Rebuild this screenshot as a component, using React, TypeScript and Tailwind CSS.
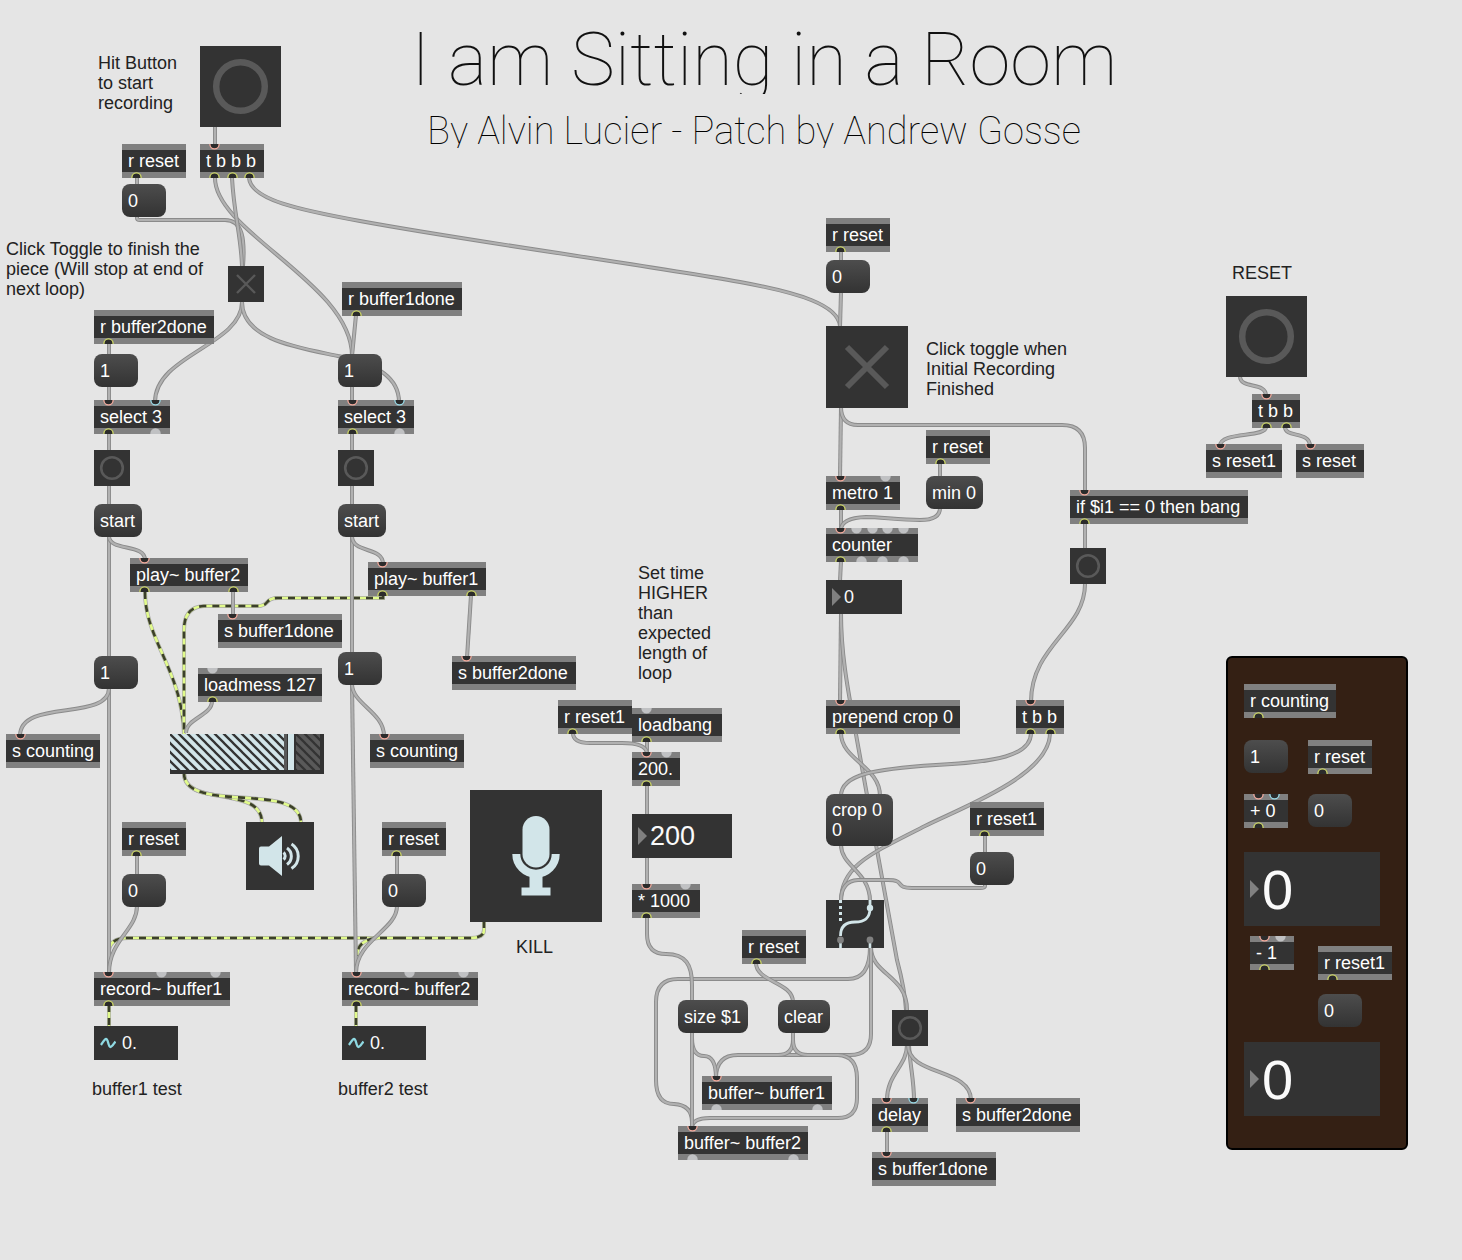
import { useState } from "react";
import type { ReactNode } from "react";

type PortKind = "hot" | "cold" | "idle" | "out";
type Port = [offset: number, kind: PortKind];
type Box = { x: number; y: number; w: number; text: string; ins?: Port[]; outs?: Port[] };
type Message = { x: number; y: number; w: number; text: string };
type Comment = { x: number; y: number; text: string };

const HOT: Port[] = [[14, "hot"]];
const OUT: Port[] = [[14, "out"]];

const boxes: Box[] = [
  { x: 122, y: 144, w: 64, text: "r reset", outs: OUT },
  { x: 200, y: 144, w: 64, text: "t b b b", ins: HOT, outs: [[14, "out"], [32, "out"], [49, "out"]] },
  { x: 94, y: 310, w: 120, text: "r buffer2done", outs: OUT },
  { x: 342, y: 282, w: 120, text: "r buffer1done", outs: OUT },
  { x: 94, y: 400, w: 76, text: "select 3", ins: [[14, "hot"], [61, "cold"]], outs: [[14, "out"], [61, "idle"]] },
  { x: 338, y: 400, w: 76, text: "select 3", ins: [[14, "hot"], [61, "cold"]], outs: [[14, "out"], [61, "idle"]] },
  { x: 130, y: 558, w: 118, text: "play~ buffer2", ins: HOT, outs: [[14, "out"], [103, "out"]] },
  { x: 368, y: 562, w: 118, text: "play~ buffer1", ins: HOT, outs: [[14, "out"], [103, "out"]] },
  { x: 218, y: 614, w: 124, text: "s buffer1done", ins: HOT },
  { x: 452, y: 656, w: 124, text: "s buffer2done", ins: HOT },
  { x: 198, y: 668, w: 124, text: "loadmess 127", ins: [[14, "idle"]], outs: OUT },
  { x: 6, y: 734, w: 94, text: "s counting", ins: HOT },
  { x: 370, y: 734, w: 94, text: "s counting", ins: HOT },
  { x: 122, y: 822, w: 64, text: "r reset", outs: OUT },
  { x: 382, y: 822, w: 64, text: "r reset", outs: OUT },
  { x: 94, y: 972, w: 136, text: "record~ buffer1", ins: [[14, "hot"], [67, "idle"], [121, "idle"]], outs: OUT },
  { x: 342, y: 972, w: 136, text: "record~ buffer2", ins: [[14, "hot"], [67, "idle"], [121, "idle"]], outs: OUT },
  { x: 558, y: 700, w: 74, text: "r reset1", outs: OUT },
  { x: 632, y: 708, w: 90, text: "loadbang", ins: [[14, "idle"]], outs: OUT },
  { x: 632, y: 752, w: 48, text: "200.", ins: [[14, "hot"], [34, "idle"]], outs: OUT },
  { x: 632, y: 884, w: 68, text: "* 1000", ins: [[14, "hot"], [53, "idle"]], outs: OUT },
  { x: 742, y: 930, w: 64, text: "r reset", outs: OUT },
  { x: 826, y: 218, w: 64, text: "r reset", outs: OUT },
  { x: 926, y: 430, w: 64, text: "r reset", outs: OUT },
  { x: 826, y: 476, w: 74, text: "metro 1", ins: [[14, "hot"], [59, "idle"]], outs: OUT },
  {
    x: 826, y: 528, w: 92, text: "counter",
    ins: [[14, "hot"], [30, "idle"], [46, "idle"], [61, "idle"], [77, "idle"]],
    outs: [[14, "out"], [35, "idle"], [56, "idle"], [77, "idle"]],
  },
  { x: 826, y: 700, w: 134, text: "prepend crop 0", ins: HOT, outs: OUT },
  { x: 1016, y: 700, w: 48, text: "t b b", ins: HOT, outs: [[14, "out"], [34, "out"]] },
  { x: 970, y: 802, w: 74, text: "r reset1", outs: OUT },
  { x: 1070, y: 490, w: 178, text: "if $i1 == 0 then bang", ins: HOT, outs: OUT },
  { x: 702, y: 1076, w: 130, text: "buffer~ buffer1", ins: HOT, outs: [[14, "idle"], [115, "idle"]] },
  { x: 678, y: 1126, w: 130, text: "buffer~ buffer2", ins: HOT, outs: [[14, "idle"], [115, "idle"]] },
  { x: 872, y: 1098, w: 56, text: "delay", ins: [[14, "hot"], [41, "cold"]], outs: OUT },
  { x: 956, y: 1098, w: 124, text: "s buffer2done", ins: HOT },
  { x: 872, y: 1152, w: 124, text: "s buffer1done", ins: HOT },
  { x: 1252, y: 394, w: 48, text: "t b b", ins: HOT, outs: [[14, "out"], [34, "out"]] },
  { x: 1206, y: 444, w: 76, text: "s reset1", ins: HOT },
  { x: 1296, y: 444, w: 68, text: "s reset", ins: HOT },
  { x: 1244, y: 684, w: 92, text: "r counting", outs: OUT },
  { x: 1308, y: 740, w: 64, text: "r reset", outs: OUT },
  { x: 1244, y: 794, w: 44, text: "+ 0", ins: [[14, "hot"], [30, "cold"]], outs: OUT },
  { x: 1250, y: 936, w: 44, text: "- 1", ins: [[14, "hot"], [30, "idle"]], outs: OUT },
  { x: 1318, y: 946, w: 74, text: "r reset1", outs: OUT },
];

const messages: Message[] = [
  { x: 122, y: 184, w: 44, text: "0" },
  { x: 94, y: 354, w: 44, text: "1" },
  { x: 338, y: 354, w: 44, text: "1" },
  { x: 94, y: 504, w: 48, text: "start" },
  { x: 338, y: 504, w: 48, text: "start" },
  { x: 94, y: 656, w: 44, text: "1" },
  { x: 338, y: 652, w: 44, text: "1" },
  { x: 122, y: 874, w: 44, text: "0" },
  { x: 382, y: 874, w: 44, text: "0" },
  { x: 826, y: 260, w: 44, text: "0" },
  { x: 926, y: 476, w: 57, text: "min 0" },
  { x: 826, y: 794, w: 67, text: "crop 0\n0" },
  { x: 970, y: 852, w: 44, text: "0" },
  { x: 678, y: 1000, w: 70, text: "size $1" },
  { x: 778, y: 1000, w: 52, text: "clear" },
  { x: 1244, y: 740, w: 44, text: "1" },
  { x: 1308, y: 794, w: 44, text: "0" },
  { x: 1318, y: 994, w: 44, text: "0" },
];

const comments: Comment[] = [
  { x: 98, y: 53, text: "Hit Button\nto start\nrecording" },
  { x: 6, y: 239, text: "Click Toggle to finish the\npiece (Will stop at end of\nnext loop)" },
  { x: 638, y: 563, text: "Set time\nHIGHER\nthan\nexpected\nlength of\nloop" },
  { x: 926, y: 339, text: "Click toggle when\nInitial Recording\nFinished" },
  { x: 1232, y: 263, text: "RESET" },
  { x: 516, y: 937, text: "KILL" },
  { x: 92, y: 1079, text: "buffer1 test" },
  { x: 338, y: 1079, text: "buffer2 test" },
];

const controlCords = [
  "M215 127V147",
  "M137 178V186",
  "M137 216V218Q137 220 140 220H225C243 220 245 240 243 266",
  "M215 178C215 232 352 284 352 356",
  "M232 178C234 215 241 235 242 266",
  "M249 178C251 200 300 210 360 221C480 243 640 264 740 282C800 293 838 305 840 326",
  "M242 302C242 345 155 355 155 402",
  "M242 302C242 340 300 348 338 356C370 362 399 374 399 402",
  "M356 315L352 356",
  "M109 343V356",
  "M109 386V402",
  "M109 434V450",
  "M109 486V506",
  "M109 536V973",
  "M109 536C109 552 145 543 145 560",
  "M109 688C109 722 20 698 20 736",
  "M352 386V402",
  "M352 434V450",
  "M352 486V506",
  "M352 536V654",
  "M352 684L356 973",
  "M352 536C352 554 383 546 383 564",
  "M352 684C352 704 384 712 384 736",
  "M233 591V616",
  "M471 595L467 658",
  "M212 701C212 716 186 718 186 733",
  "M137 855V876",
  "M137 906C137 930 109 940 109 973",
  "M397 855V876",
  "M397 906C397 930 356 940 356 973",
  "M841 251V262",
  "M841 292L840 327",
  "M841 407L840 478",
  "M841 407Q841 425 858 425H1062Q1085 425 1085 448V492",
  "M841 509V530",
  "M940 508Q940 520 920 520C900 520 880 517 866 517Q841 518 841 530",
  "M940 463V478",
  "M841 561L840 581",
  "M841 613L840 702",
  "M841 613C841 660 850 700 857 740L897 960Q905 990 906 1010",
  "M841 733C841 760 880 766 880 796",
  "M1031 733C1031 756 995 762 936 765C875 769 841 774 841 796",
  "M1050 733C1050 775 965 806 925 826C870 854 841 866 841 901",
  "M1085 523V549",
  "M1085 584C1085 630 1031 645 1031 702",
  "M841 845C841 866 870 872 870 901",
  "M985 835V854",
  "M985 884V886Q985 888 980 888H912C894 888 906 880 888 880H858Q841 881 841 901",
  "M871 947C871 975 907 975 907 1010",
  "M870 947Q870 979 848 979H678Q656 979 656 1002V1080Q656 1104 674 1104Q692 1105 692 1122",
  "M871 947V1034Q871 1055 850 1055H738Q716 1055 716 1078",
  "M793 1032V1040Q793 1055 778 1055",
  "M793 1032V1040Q793 1055 808 1055H838Q857 1056 857 1078V1098Q857 1118 838 1118H710Q692 1118 692 1128",
  "M692 1032V1038Q692 1056 704 1056Q716 1056 716 1078",
  "M692 1032V1128",
  "M756 963C756 982 793 982 793 1002",
  "M647 916V934Q647 954 666 954C686 954 692 965 692 985V1002",
  "M647 857V886",
  "M647 785V815",
  "M647 741V754",
  "M573 733Q573 743 590 743H622Q647 743 647 754",
  "M907 1045C907 1066 887 1074 887 1100",
  "M909 1045C910 1066 914 1080 914 1100",
  "M908 1045C908 1076 971 1068 971 1100",
  "M887 1131V1154",
  "M1240 376C1240 390 1266 381 1266 396",
  "M1266 427C1266 438 1220 431 1220 446",
  "M1285 427C1285 438 1310 431 1310 446",
];

const signalCords = [
  "M145 592C145 640 182 670 184 734",
  "M383 595V598H278C264 598 270 606 258 606H204Q184 607 184 630V734",
  "M184 773C184 808 262 784 262 823",
  "M184 773C184 815 301 780 301 823",
  "M484 921V930Q484 938 470 938H128Q109 938 109 952",
  "M400 938H378Q357 940 357 956",
  "M109 1005V1027",
  "M356 1005V1027",
];

function PatchCords() {
  return (
    <svg width="1462" height="1260" fill="none" aria-hidden="true" className="pointer-events-none absolute top-0 left-0">
      {signalCords.map((d) => (
        <g key={d}>
          <path d={d} stroke="#a9a9a9" strokeWidth="4" />
          <path d={d} stroke="#e1fb8b" strokeWidth="2.6" />
          <path d={d} stroke="#3b3f2a" strokeWidth="2.6" strokeDasharray="7 6" />
        </g>
      ))}
      {controlCords.map((d) => (
        <g key={d}>
          <path d={d} stroke="#8b8b8b" strokeWidth="4" />
          <path d={d} stroke="#b1b1b1" strokeWidth="2.2" />
        </g>
      ))}
    </svg>
  );
}

/* Positions one item of the patch on the free canvas. */
function Place({ x, y, children }: { x: number; y: number; children: ReactNode }) {
  return (
    <div className="absolute flex" style={{ left: x, top: y }}>
      {children}
    </div>
  );
}

const ringColor: Record<PortKind, string> = { hot: "#f5aa9c", cold: "#98dbe8", idle: "#c0c1c3", out: "#cfd966" };

function Ports({ w, ports, inlet }: { w: number; ports: Port[]; inlet: boolean }) {
  return (
    <svg width={w} height="6" className="block bg-[#808080]" aria-hidden="true">
      {ports.map(([cx, kind]) => (
        <circle
          key={cx}
          cx={cx + 0.5}
          cy={inlet ? 0.3 : 5.5}
          r={kind === "idle" ? 5.2 : 4.6}
          fill={kind === "idle" ? "#c0c1c3" : "#2b2b2b"}
          stroke={ringColor[kind]}
          strokeWidth={kind === "idle" ? 0 : 1.3}
        />
      ))}
    </svg>
  );
}

function ObjectBox({ box }: { box: Box }) {
  return (
    <div style={{ width: box.w }} className="bg-[#333333]">
      <Ports w={box.w} ports={box.ins ?? []} inlet />
      <p className="h-[22px] pl-1.5 text-[18px] leading-[22px] whitespace-nowrap text-white">{box.text}</p>
      <Ports w={box.w} ports={box.outs ?? []} inlet={false} />
    </div>
  );
}

function MessageBox({ message }: { message: Message }) {
  return (
    <button
      type="button"
      style={{ width: message.w }}
      className="min-h-[33px] rounded-lg bg-linear-to-b from-[#4d4d4d] to-[#333333] py-1.5 pl-1.5 text-left text-[18px] leading-5 whitespace-pre text-white"
    >
      {message.text}
    </button>
  );
}

function Bang({ size, label }: { size: number; label: string }) {
  const big = size > 50;
  return (
    <button type="button" aria-label={label} className="bg-[#333333]">
      <svg width={size} height={size} fill="none" className="block">
        <circle cx={size / 2} cy={size / 2} r={big ? 24.3 : 10.8} stroke="#595959" strokeWidth={big ? 6.5 : 2.6} />
      </svg>
    </button>
  );
}

function Toggle({ size, label }: { size: number; label: string }) {
  const [on, setOn] = useState(false);
  const a = size > 50 ? 21 : 9;
  const b = size - a;
  return (
    <label className="bg-[#333333]">
      <input type="checkbox" aria-label={label} checked={on} onChange={() => setOn(!on)} className="peer sr-only" />
      <svg
        width={size}
        height={size}
        strokeWidth={size > 50 ? 6 : 2.4}
        className="block stroke-[#595959] peer-checked:stroke-[#d2e5e9]"
      >
        <path d={`M${a} ${a}L${b} ${b}M${b} ${a}L${a} ${b}`} />
      </svg>
    </label>
  );
}

function Marker() {
  return (
    <svg width="9" height="18" className="shrink-0" aria-hidden="true">
      <path d="M0 0L9 9L0 18Z" fill="#808080" />
    </svg>
  );
}

function NumberBox({ label, value, className }: { label: string; value: string; className: string }) {
  return (
    <label className={`flex items-center gap-[3px] bg-[#333333] pl-1.5 text-[#fafafa] ${className}`}>
      <Marker />
      <input aria-label={label} defaultValue={value} inputMode="numeric" className="h-full w-full min-w-0 bg-transparent p-0 outline-none" />
    </label>
  );
}

function SignalNumber({ label }: { label: string }) {
  return (
    <label className="flex h-[34px] w-[84px] items-center gap-1.5 bg-[#333333] pl-1.5 text-[18px] text-[#fafafa]">
      <svg width="16" height="12" fill="none" className="shrink-0" aria-hidden="true">
        <path d="M1 8C3 5 4.500 2 6 2C8.500 2 8 10 10.500 10C12 10 13.500 7 15.500 4.500" stroke="#8fd9e2" strokeWidth="2.3" />
      </svg>
      <input aria-label={label} defaultValue="0." className="h-full w-full min-w-0 bg-transparent p-0 outline-none" />
    </label>
  );
}

function GainSlider() {
  return (
    <label className="block bg-[#333333]">
      <input type="range" aria-label="Output gain" min="0" max="157" defaultValue="127" className="sr-only" />
      <svg width="154" height="40" className="block" aria-hidden="true">
        <defs>
          <pattern id="hatch" width="9" height="9" patternUnits="userSpaceOnUse">
            <path d="M-2 -2L11 11M-2 7L2 11M7 -2L11 2" stroke="#333333" strokeWidth="2.3" />
          </pattern>
        </defs>
        <rect width="114" height="36" fill="#d2e5e9" />
        <rect x="114" width="3" height="36" fill="#595959" />
        <rect x="118" width="6" height="36" fill="#d2e5e9" />
        <rect x="126" width="24" height="36" fill="#595959" />
        <rect width="114" height="36" fill="url(#hatch)" />
        <rect x="126" width="24" height="36" fill="url(#hatch)" />
      </svg>
    </label>
  );
}

function Speaker() {
  return (
    <button type="button" aria-label="Audio output" className="bg-[#333333]">
      <svg width="68" height="68" fill="none" className="block">
        <path d="M15 24.500H23L36 14V54L23 43.500H15Q13 43.500 13 41.500V26.500Q13 24.500 15 24.500Z" fill="#d2e5e9" />
        <g stroke="#d2e5e9" strokeWidth="3">
          <path d="M37.500 30.500A4.500 4.500 0 0 1 37.500 37.500" />
          <path d="M41 26A10 10 0 0 1 41 42.500" />
          <path d="M45.500 22A14.500 14.500 0 0 1 45.500 46.500" />
        </g>
      </svg>
    </button>
  );
}

function Microphone() {
  return (
    <button type="button" aria-label="Audio input" className="bg-[#333333]">
      <svg width="132" height="132" fill="none" className="block">
        <rect x="52.500" y="26" width="27" height="51.500" rx="13.500" fill="#d2e5e9" />
        <path d="M46.300 64A19.700 19.700 0 0 0 85.700 64" stroke="#d2e5e9" strokeWidth="8" />
        <path d="M59.500 86H72.500V97.500H80.500V105.500H51.500V97.500H59.500Z" fill="#d2e5e9" />
      </svg>
    </button>
  );
}

function RoutingSwitch() {
  return (
    <button type="button" aria-label="Routing switch" className="bg-[#333333]">
      <svg width="58" height="48" fill="none" className="block">
        <path d="M14.500 0V22" stroke="#d2e5e9" strokeWidth="3" strokeDasharray="3 3" />
        <path d="M44 0V8C44 19 38 22 29 22C20 22 14.500 26 14.500 36" stroke="#d2e5e9" strokeWidth="2.8" />
        <circle cx="44" cy="8" r="3.200" fill="#d2e5e9" />
        <path d="M14.500 42V48M44 42V48" stroke="#d2e5e9" strokeWidth="2.6" />
        <circle cx="14.500" cy="40" r="3.400" fill="#808080" />
        <circle cx="44" cy="40" r="3.400" fill="#808080" />
      </svg>
    </button>
  );
}

export default function App() {
  return (
    <main className="relative min-h-screen w-full overflow-x-auto bg-[#e5e5e5] font-['Liberation_Sans',Arial,sans-serif]">
      <PatchCords />

      <Place x={411} y={22}>
        <h1 className="h-[72px] overflow-hidden font-[Roboto,sans-serif] text-[74px] leading-[75px] font-thin whitespace-nowrap text-[#111111]">
          I am Sitting in a Room
        </h1>
      </Place>
      <Place x={427} y={112}>
        <p className="h-9 overflow-hidden font-[Roboto,sans-serif] text-[38px] leading-[38px] font-thin whitespace-nowrap text-black">
          By Alvin Lucier - Patch by Andrew Gosse
        </p>
      </Place>

      <Place x={1226} y={656}>
        <div className="h-[494px] w-[182px] rounded-md border-2 border-black bg-[#342014]" />
      </Place>

      {comments.map((c) => (
        <Place key={c.text} x={c.x} y={c.y}>
          <p className="text-[18px] leading-5 whitespace-pre text-[#222222]">{c.text}</p>
        </Place>
      ))}
      {boxes.map((b) => (
        <Place key={`${b.x}-${b.y}`} x={b.x} y={b.y}>
          <ObjectBox box={b} />
        </Place>
      ))}
      {messages.map((m) => (
        <Place key={`${m.x}-${m.y}`} x={m.x} y={m.y}>
          <MessageBox message={m} />
        </Place>
      ))}

      <Place x={200} y={46}><Bang size={81} label="Start recording" /></Place>
      <Place x={1226} y={296}><Bang size={81} label="Reset" /></Place>
      <Place x={94} y={450}><Bang size={36} label="Bang buffer 2" /></Place>
      <Place x={338} y={450}><Bang size={36} label="Bang buffer 1" /></Place>
      <Place x={1070} y={548}><Bang size={36} label="Bang crop" /></Place>
      <Place x={892} y={1010}><Bang size={36} label="Bang delay" /></Place>

      <Place x={228} y={266}><Toggle size={36} label="Finish the piece" /></Place>
      <Place x={826} y={326}><Toggle size={82} label="Initial recording finished" /></Place>

      <Place x={826} y={580}><NumberBox label="Counter value" value="0" className="h-[34px] w-[76px] text-[18px]" /></Place>
      <Place x={632} y={814}><NumberBox label="Loop time" value="200" className="h-11 w-[100px] text-[27px]" /></Place>
      <Place x={1244} y={852}><NumberBox label="Loop count" value="0" className="h-[74px] w-[136px] text-[56px]" /></Place>
      <Place x={1244} y={1042}><NumberBox label="Previous loop count" value="0" className="h-[74px] w-[136px] text-[56px]" /></Place>

      <Place x={94} y={1026}><SignalNumber label="buffer1 test" /></Place>
      <Place x={342} y={1026}><SignalNumber label="buffer2 test" /></Place>

      <Place x={170} y={734}><GainSlider /></Place>
      <Place x={246} y={822}><Speaker /></Place>
      <Place x={470} y={790}><Microphone /></Place>
      <Place x={826} y={900}><RoutingSwitch /></Place>
    </main>
  );
}
